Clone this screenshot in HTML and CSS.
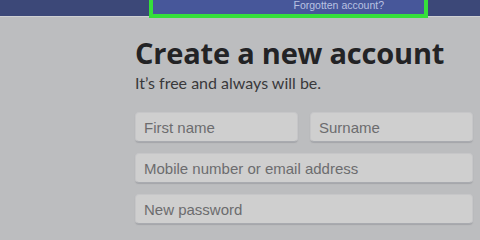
FILE: index.html
```html
<!DOCTYPE html>
<html>
<head>
<meta charset="utf-8">
<link rel="stylesheet" href="styles.css">
</head>
<body>
<header class="topbar">
  <div class="highlight">
    <span class="forgot">Forgotten account?</span>
  </div>
</header>
<main class="signup">
  <h1 class="title">Create a new account</h1>
  <p class="subtitle">It’s free and always will be.</p>
  <div class="fields">
    <div class="row">
      <div class="input half">First name</div>
      <div class="input half">Surname</div>
    </div>
    <div class="input">Mobile number or email address</div>
    <div class="input">New password</div>
  </div>
</main>
</body>
</html>
```
FILE: styles.css
```css
html, body {
  margin: 0;
  padding: 0;
  background: #bcbdbf;
  width: 480px;
  height: 240px;
  overflow: hidden;
}
.topbar {
  height: 16px;
  background: #3c4878;
  border-bottom: 1px solid #cfd0d3;
  display: flex;
  align-items: flex-end;
}
.highlight {
  margin-left: 149px;
  height: 14px;
  margin-bottom: -2px;
  border: 4px solid #35e03a;
  border-top: none;
  background: #47579a;
  display: flex;
  justify-content: flex-end;
  align-items: flex-start;
  padding-right: 40px;
  box-sizing: content-box;
  width: 231px;
}
.forgot {
  font-family: "Liberation Sans", Arial, sans-serif;
  font-size: 10.5px;
  line-height: 11px;
  color: #b9c2e2;
}
.signup {
  padding-left: 135px;
  padding-right: 7px;
  padding-top: 19px;
}
.title {
  margin: 0;
  font-family: "Open Sans", Lato, sans-serif;
  font-weight: 700;
  font-size: 29px;
  line-height: 34px;
  color: #232325;
  letter-spacing: -0.2px;
}
.subtitle {
  margin: 4px 0 0 0;
  font-family: Lato, "Open Sans", sans-serif;
  font-size: 16px;
  line-height: 18px;
  color: #39393b;
}
.fields {
  margin-top: 20px;
  display: flex;
  flex-direction: column;
  gap: 11px;
}
.row {
  display: flex;
  gap: 12px;
}
.input {
  height: 30px;
  box-sizing: border-box;
  background: #cfcfcf;
  border: 1px solid #c6c6c8;
  border-bottom-color: #a9abb0;
  border-radius: 4px;
  padding-left: 8px;
  display: flex;
  align-items: center;
  font-family: "Liberation Sans", Arial, sans-serif;
  font-size: 15px;
  color: #6c6c6e;
  box-shadow: 0 1px 1px rgba(120,122,130,0.35);
}
.half {
  flex: 1;
}
```
